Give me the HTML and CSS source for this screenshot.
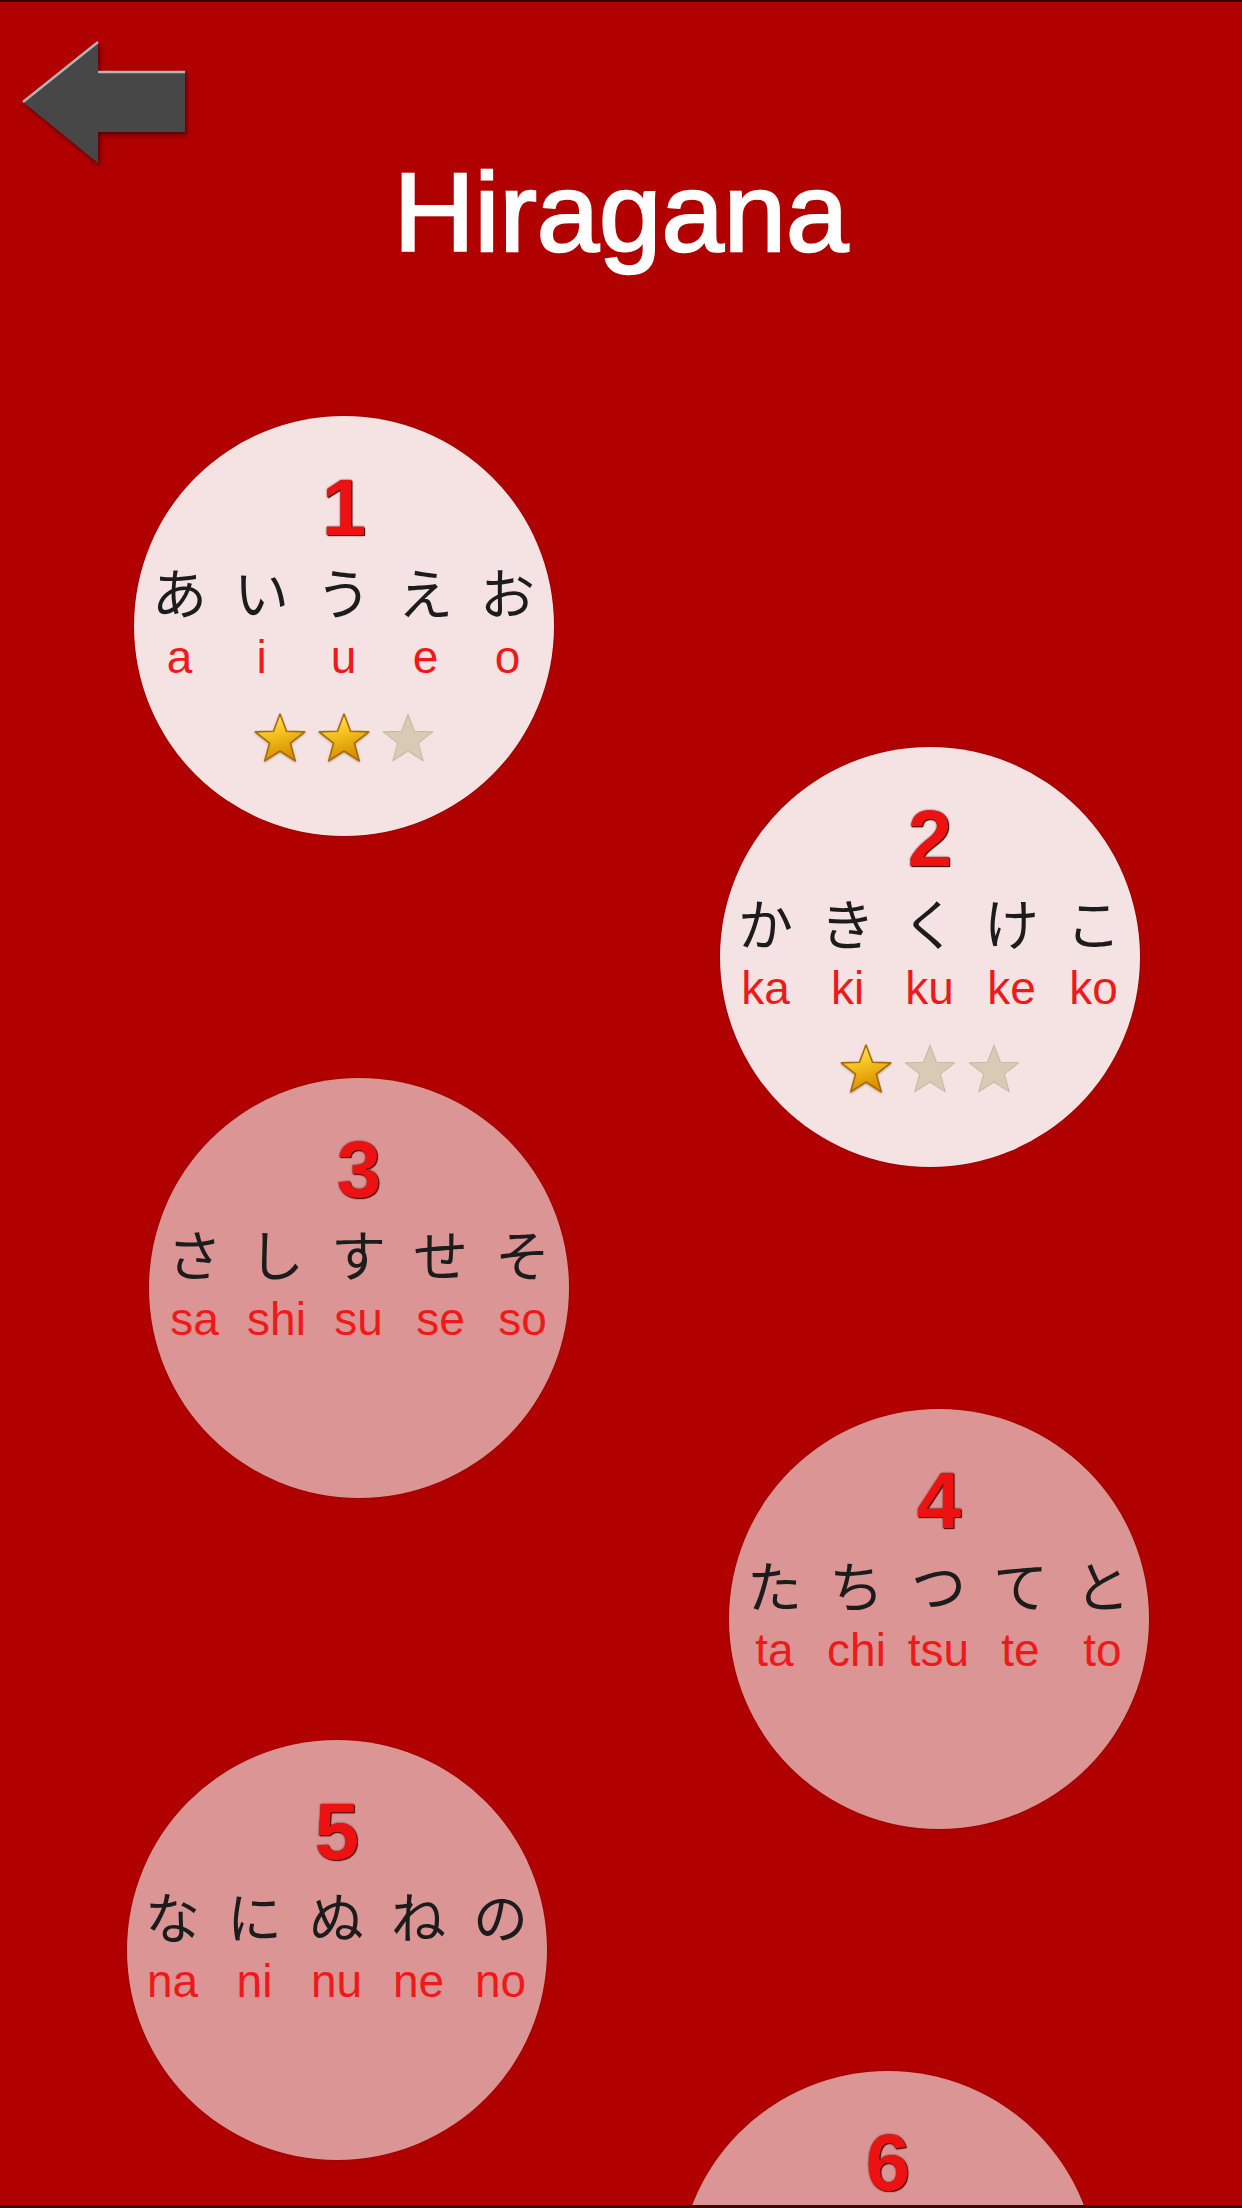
FILE: index.html
```html
<!DOCTYPE html>
<html lang="ja">
<head>
<meta charset="utf-8">
<title>Hiragana</title>
<link rel="stylesheet" href="styles.css">
</head>
<body>
<svg class="defs" width="0" height="0" aria-hidden="true">
  <defs>
    <linearGradient id="gold" x1="0" y1="0" x2="0.3" y2="1">
      <stop offset="0" stop-color="#fff07a"/>
      <stop offset="0.45" stop-color="#f7c623"/>
      <stop offset="1" stop-color="#d88f00"/>
    </linearGradient>
    <symbol id="star" viewBox="0 0 100 100">
      <polygon points="50,4 62.5,37 97.6,38.2 70,60 79.4,94 50,75 20.6,94 30,60 2.4,38.2 37.5,37"/>
    </symbol>
  </defs>
</svg>
<div class="screen">
  <header class="header">
    <svg class="back" width="170" height="130" viewBox="0 0 170 130">
      <polygon class="arrow-body" points="3,66 78,6 78,36 165,36 165,96 78,96 78,127"/>
      <polyline class="arrow-light" points="3,66 78,6"/>
      <polyline class="arrow-light" points="78,36 165,36"/>
    </svg>
    <h1 class="title">Hiragana</h1>
  </header>

  <main class="lessons">
    <div class="lesson done pos1">
      <div class="num">1</div>
      <div class="kana"><span>あ</span><span>い</span><span>う</span><span>え</span><span>お</span></div>
      <div class="romaji"><span>a</span><span>i</span><span>u</span><span>e</span><span>o</span></div>
      <div class="stars">
        <svg class="star on"><use href="#star"/></svg>
        <svg class="star on"><use href="#star"/></svg>
        <svg class="star off"><use href="#star"/></svg>
      </div>
    </div>

    <div class="lesson done pos2">
      <div class="num">2</div>
      <div class="kana"><span>か</span><span>き</span><span>く</span><span>け</span><span>こ</span></div>
      <div class="romaji"><span>ka</span><span>ki</span><span>ku</span><span>ke</span><span>ko</span></div>
      <div class="stars">
        <svg class="star on"><use href="#star"/></svg>
        <svg class="star off"><use href="#star"/></svg>
        <svg class="star off"><use href="#star"/></svg>
      </div>
    </div>

    <div class="lesson locked pos3">
      <div class="num">3</div>
      <div class="kana"><span>さ</span><span>し</span><span>す</span><span>せ</span><span>そ</span></div>
      <div class="romaji"><span>sa</span><span>shi</span><span>su</span><span>se</span><span>so</span></div>
    </div>

    <div class="lesson locked pos4">
      <div class="num">4</div>
      <div class="kana"><span>た</span><span>ち</span><span>つ</span><span>て</span><span>と</span></div>
      <div class="romaji"><span>ta</span><span>chi</span><span>tsu</span><span>te</span><span>to</span></div>
    </div>

    <div class="lesson locked pos5">
      <div class="num">5</div>
      <div class="kana"><span>な</span><span>に</span><span>ぬ</span><span>ね</span><span>の</span></div>
      <div class="romaji"><span>na</span><span>ni</span><span>nu</span><span>ne</span><span>no</span></div>
    </div>

    <div class="lesson locked pos6">
      <div class="num">6</div>
    </div>
  </main>
</div>
</body>
</html>
```

FILE: styles.css
```css
html, body {
  margin: 0;
  padding: 0;
}

body {
  width: 1242px;
  height: 2208px;
  overflow: hidden;
  background: #b00000;
  font-family: "Liberation Sans", Arial, sans-serif;
}

.defs {
  position: absolute;
  width: 0;
  height: 0;
}

.screen {
  box-sizing: border-box;
  width: 1242px;
  height: 2208px;
  overflow: hidden;
  border-top: 2px solid #3c0000;
  border-bottom: 3px solid #3a0606;
  background: #b00000;
}

.header {
  display: flex;
  flex-direction: column;
  padding-top: 34px;
}

.back {
  display: block;
  margin-left: 20px;
  filter: drop-shadow(2px 3px 2px rgba(40, 0, 0, 0.6));
}

.arrow-body {
  fill: #474747;
}

.arrow-light {
  fill: none;
  stroke: #b4b4b4;
  stroke-width: 2.5;
}

.title {
  margin: -9px 0 0;
  text-align: center;
  color: #ffffff;
  font-family: "Liberation Sans", Arial, sans-serif;
  font-weight: 400;
  font-size: 112px;
  line-height: 112px;
  -webkit-text-stroke: 2.5px #ffffff;
}

.lessons {
  display: flex;
  flex-direction: column;
  align-items: flex-start;
  margin-top: 147px;
}

.lesson {
  box-sizing: border-box;
  width: 420px;
  height: 420px;
  flex: none;
  border-radius: 50%;
  display: flex;
  flex-direction: column;
  align-items: center;
  padding-top: 52px;
  margin-top: -89px;
  box-shadow: 0 0 0 1px rgba(120, 0, 0, 0.25);
}

.lesson.done {
  background: #f5e3e3;
}

.lesson.locked {
  background: #dc9595;
}

.pos1 { margin-left: 134px; margin-top: 0; }
.pos2 { margin-left: 720px; }
.pos3 { margin-left: 149px; }
.pos4 { margin-left: 729px; }
.pos5 { margin-left: 127px; }
.pos6 { margin-left: 678px; }

.num {
  font-family: "Liberation Sans", Arial, sans-serif;
  font-weight: 700;
  font-size: 80px;
  line-height: 80px;
  height: 80px;
  color: #ee1111;
  text-shadow: 0 0 2px #4a0000, 1px 1px 1px #3a0000;
}

.kana,
.romaji {
  display: grid;
  grid-template-columns: repeat(5, 82px);
  justify-items: center;
  margin-left: -1px;
}

.kana {
  margin-top: 12px;
  height: 60px;
  font-family: "Noto Sans CJK JP", "Noto Sans", sans-serif;
  font-weight: 400;
  font-size: 55px;
  line-height: 60px;
  color: #1c1c1c;
}

.romaji {
  margin-top: 12px;
  height: 50px;
  font-family: "Liberation Sans", Arial, sans-serif;
  font-size: 46px;
  line-height: 50px;
  color: #ee1a1a;
  white-space: nowrap;
}

.stars {
  display: flex;
  gap: 12px;
  margin-top: 30px;
}

.star {
  width: 52px;
  height: 52px;
}

.star.on {
  fill: url(#gold);
  stroke: #a86a00;
  stroke-width: 3;
  stroke-linejoin: round;
  filter: drop-shadow(0 1px 1px rgba(90, 50, 0, 0.35));
}

.star.off {
  fill: #d9cab5;
  stroke: #cbb89e;
  stroke-width: 2;
  stroke-linejoin: round;
}
```
